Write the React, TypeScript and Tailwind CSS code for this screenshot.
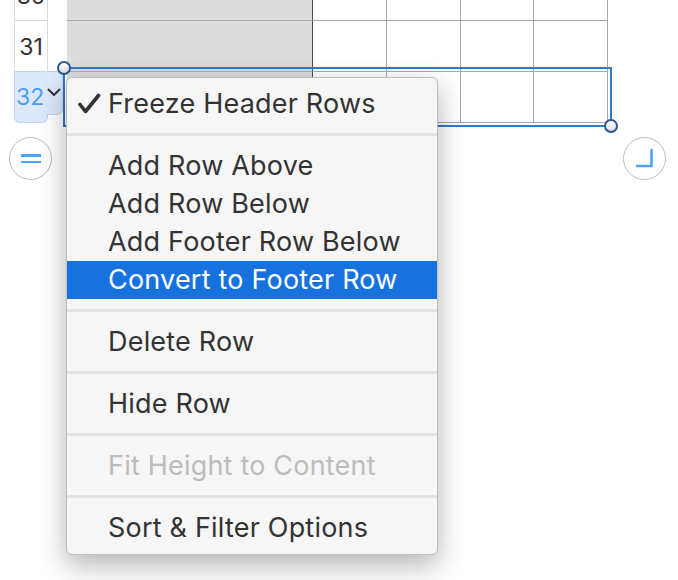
import React from 'react';

const FONT = "Inter, 'Liberation Sans', sans-serif";

const GROUPS = [
  [{ label: 'Freeze Header Rows', checked: true }],
  [
    { label: 'Add Row Above' },
    { label: 'Add Row Below' },
    { label: 'Add Footer Row Below' },
    { label: 'Convert to Footer Row', active: true },
  ],
  [{ label: 'Delete Row' }],
  [{ label: 'Hide Row' }],
  [{ label: 'Fit Height to Content', disabled: true }],
  [{ label: 'Sort & Filter Options' }],
];

type Item = { label: string; checked?: boolean; active?: boolean; disabled?: boolean };

function Cells() {
  return (
    <>
      <div className="w-[246px] h-full shrink-0 bg-[#dcdcdc] border-r border-r-[#4a4a4a] border-b border-b-[#a9a9a9]" />
      <div className="w-[74px] h-full shrink-0 border-r border-b border-[#a9a9a9]" />
      <div className="w-[74px] h-full shrink-0 border-r border-b border-[#a9a9a9]" />
      <div className="w-[73px] h-full shrink-0 border-r border-b border-[#a9a9a9]" />
      <div className="w-[74px] h-full shrink-0 border-r border-b border-[#a9a9a9]" />
    </>
  );
}

function CheckMark() {
  return (
    <svg width="24" height="22" viewBox="0 0 24 22" className="absolute left-[10px] top-[8px]">
      <path d="M3 11.5 L8.5 18.5 L21.5 2.5" fill="none" stroke="#333" strokeWidth="3.6" strokeLinecap="round" strokeLinejoin="round" />
    </svg>
  );
}

function MenuItem({ item }: { item: Item }) {
  const color = item.active ? 'bg-[#1772de] text-white' : item.disabled ? 'text-[#bcbcbc]' : 'text-[#333333]';
  return (
    <div className={`relative h-[38px] pl-[41px] pt-[1px] flex items-center text-[27px] tracking-[0.2px] ${color}`}>
      {item.checked && <CheckMark />}
      {item.label}
    </div>
  );
}

export default function App() {
  return (
    <div className="relative w-[678px] h-[580px] overflow-hidden bg-white" style={{ fontFamily: FONT }}>
      {/* table */}
      <div className="-mt-[27px] flex flex-col">
        <div className="flex h-[48px]">
          <div className="ml-[14px] w-[34px] h-full border-x border-b border-[#dadada] flex items-center justify-center text-[23px] text-[#333]">30</div>
          <div className="w-[19px]" />
          <Cells />
        </div>
        <div className="flex h-[51px]">
          <div className="ml-[14px] w-[34px] h-full border-x border-[#dadada] flex items-center justify-center pt-[2px] text-[23px] text-[#333]">31</div>
          <div className="w-[19px]" />
          <Cells />
        </div>
        <div className="flex h-[51px]">
          <div className="ml-[14px] w-[49px] flex flex-col">
            <div className="h-[44px] -mt-px bg-[#dce9fb] border border-[#c3d5ec] rounded-br-[6px] flex items-center pl-[1px] pt-[8px]">
              <span className="text-[23px] text-[#4a9ef5] leading-none">32</span>
              <svg width="14" height="9" viewBox="0 0 14 9" className="ml-[3px] -mt-[10px]">
                <path d="M1.5 1.5 L7 7 L12.5 1.5" fill="none" stroke="#333" strokeWidth="2" strokeLinecap="round" strokeLinejoin="round" />
              </svg>
            </div>
            <div className="w-[34px] h-[9px] -mt-px bg-[#dce9fb] border-x border-b border-[#c3d5ec] rounded-b-[6px]" />
          </div>
          <div className="w-[4px]" />
          <Cells />
        </div>
      </div>

      {/* selection */}
      <div className="absolute left-[63px] top-[67px] w-[549px] h-[60px] border-2 border-[#2f78cc]" />
      <div className="absolute left-[57px] top-[61px] w-[14px] h-[14px] rounded-full border-2 border-[#2d5796] bg-gradient-to-b from-white to-[#dedede]" />
      <div className="absolute left-[604px] top-[119px] w-[14px] h-[14px] rounded-full border-2 border-[#2d5796] bg-gradient-to-b from-white to-[#dedede]" />

      {/* row/column handles */}
      <div className="absolute left-[9px] top-[137px] w-[43px] h-[43px] rounded-full border-[1.5px] border-[#bdbdbd] bg-white flex flex-col items-center justify-center gap-[4px]">
        <div className="w-[20px] h-[2.5px] bg-[#4ba3f5]" />
        <div className="w-[20px] h-[2.5px] bg-[#4ba3f5]" />
      </div>
      <div className="absolute left-[623px] top-[137px] w-[43px] h-[43px] rounded-full border-[1.5px] border-[#bdbdbd] bg-white">
        <svg width="43" height="43" viewBox="0 0 43 43" className="absolute -left-[1.5px] -top-[1.5px]">
          <path d="M28.5 12 V29 H13" fill="none" stroke="#4ba3f5" strokeWidth="2.5" />
        </svg>
      </div>

      {/* context menu */}
      <div className="absolute left-[66px] top-[77px] w-[372px] py-[7px] bg-[#f6f6f6] border border-[#bdbdbd] rounded-[6px] shadow-[0_10px_28px_rgba(0,0,0,0.3)]">
        {GROUPS.map((group, gi) => (
          <div key={gi}>
            {gi > 0 && (
              <div className="h-[24px] pt-[10px]">
                <div className="h-[3px] bg-[#e3e3e3]" />
              </div>
            )}
            {group.map((item) => (
              <MenuItem key={item.label} item={item} />
            ))}
          </div>
        ))}
      </div>
    </div>
  );
}
